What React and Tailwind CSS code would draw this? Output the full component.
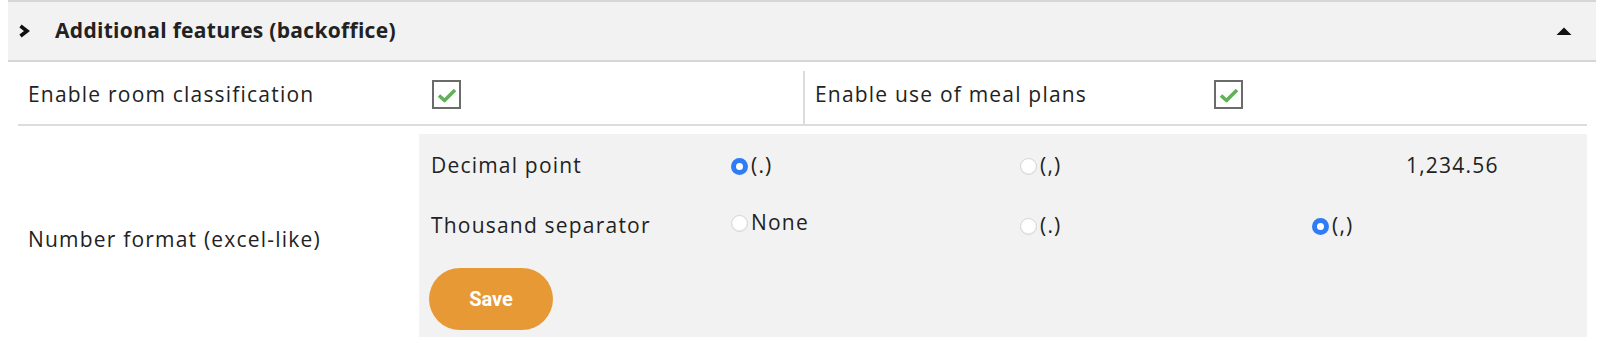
import { useState } from "react";

function Check({ checked, onClick }) {
  return (
    <button
      onClick={onClick}
      className="w-[29px] h-[29px] border-2 border-[#6b6b6b] bg-white flex items-center justify-center cursor-pointer"
    >
      {checked && (
        <svg width="20" height="16" viewBox="0 0 20 16">
          <path d="M2 8.5 L7.5 13.5 L18 3" fill="none" stroke="#62b15a" strokeWidth="3.6" strokeLinejoin="round" />
        </svg>
      )}
    </button>
  );
}

function Radio({ checked, onClick, label }) {
  return (
    <label onClick={onClick} className="flex items-center gap-[3px] cursor-pointer">
      {checked ? (
        <span className="w-[17px] h-[17px] rounded-full bg-[#2f7cf6] flex items-center justify-center">
          <span className="w-[7px] h-[7px] rounded-full bg-white" />
        </span>
      ) : (
        <span className="w-[17px] h-[17px] rounded-full bg-white border border-[#d4d4d4] shadow-[inset_0_-1px_1px_rgba(0,0,0,0.08)]" />
      )}
      <span>{label}</span>
    </label>
  );
}

export default function App() {
  const [rooms, setRooms] = useState(true);
  const [meals, setMeals] = useState(true);
  const [decimal, setDecimal] = useState(".");
  const [thousand, setThousand] = useState(",");

  const sample = "1" + (thousand === "none" ? "" : thousand) + "234" + decimal + "56";

  return (
    <div className="font-['Open_Sans',sans-serif] text-[#222] text-[21px] tracking-[1.2px] bg-white h-[348px] pl-2 pr-1">
      {/* Header */}
      <div className="flex items-center h-[62px] bg-[#f2f2f2] border-y-2 border-[#d6d6d6]">
        <svg className="ml-[10px]" width="13" height="14" viewBox="0 0 13 14">
          <path d="M2.5 2 L9 7 L2.5 12" fill="none" stroke="#111" strokeWidth="3.6" />
        </svg>
        <span className="ml-[24px] font-bold text-[21px] tracking-[0.3px]">Additional features (backoffice)</span>
        <svg className="ml-auto mr-[24px]" width="16" height="10" viewBox="0 0 16 10">
          <path d="M0.5 9 L8 1.5 L15.5 9 Z" fill="#111" />
        </svg>
      </div>

      <div className="ml-[10px] mr-[9px]">
        {/* Checkbox row */}
        <div className="flex h-[64px] border-b-2 border-[#dcdcdc]">
          <div className="w-[785px] flex items-center pl-[10px] mt-[3px]">
            <span className="w-[404px]">Enable room classification</span>
            <Check checked={rooms} onClick={() => setRooms(!rooms)} />
          </div>
          <div className="flex items-center pl-[10px] mt-[9px] border-l-2 border-[#dcdcdc]">
            <span className="w-[399px] -mt-[6px]">Enable use of meal plans</span>
            <span className="-mt-[6px]">
              <Check checked={meals} onClick={() => setMeals(!meals)} />
            </span>
          </div>
        </div>

        {/* Number format */}
        <div className="flex pt-[8px]">
          <div className="w-[401px] flex items-center pl-[10px] pt-[8px]">Number format (excel-like)</div>
          <div className="flex-1 bg-[#f2f2f2] h-[203px] pl-[12px] pt-[14px]">
            <div className="grid grid-cols-[300px_289px_292px_1fr] items-center h-[36px]">
              <span>Decimal point</span>
              <Radio checked={decimal === "."} onClick={() => setDecimal(".")} label="(.)" />
              <Radio checked={decimal === ","} onClick={() => setDecimal(",")} label="(,)" />
              <span className="pl-[94px]">{sample}</span>
            </div>
            <div className="grid grid-cols-[300px_289px_292px_1fr] items-center h-[36px] mt-[24px]">
              <span>Thousand separator</span>
              <div className="-mt-[6px]">
                <Radio checked={thousand === "none"} onClick={() => setThousand("none")} label="None" />
              </div>
              <Radio checked={thousand === "."} onClick={() => setThousand(".")} label="(.)" />
              <Radio checked={thousand === ","} onClick={() => setThousand(",")} label="(,)" />
            </div>
            <button className="mt-[24px] -ml-[2px] w-[124px] h-[62px] rounded-full bg-[#e79936] text-white font-['Roboto',sans-serif] font-bold text-[20px] tracking-normal">
              Save
            </button>
          </div>
        </div>
      </div>
    </div>
  );
}
